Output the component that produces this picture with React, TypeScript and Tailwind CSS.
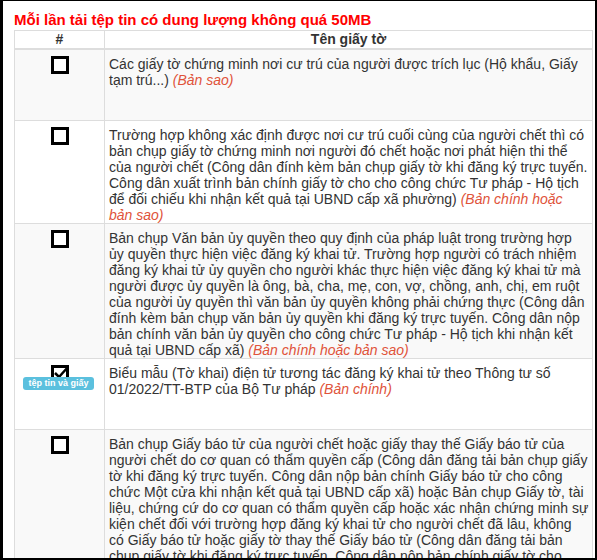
// each line: [plain text, italic note]
type Line = [string, string?];

const rows: { lines: Line[]; checked?: boolean; badge?: string }[] = [
  {
    lines: [
      ["Các giấy tờ chứng minh nơi cư trú của người được trích lục (Hộ khẩu, Giấy"],
      ["tạm trú...) ", "(Bản sao)"],
    ],
  },
  {
    lines: [
      ["Trường hợp không xác định được nơi cư trú cuối cùng của người chết thì có"],
      ["bản chụp giấy tờ chứng minh nơi người đó chết hoặc nơi phát hiện thi thể"],
      ["của người chết (Công dân đính kèm bản chụp giấy tờ khi đăng ký trực tuyến."],
      ["Công dân xuất trình bản chính giấy tờ cho cho công chức Tư pháp - Hộ tịch"],
      ["để đối chiếu khi nhận kết quả tại UBND cấp xã phường) ", "(Bản chính hoặc"],
      ["", "bản sao)"],
    ],
  },
  {
    lines: [
      ["Bản chụp Văn bản ủy quyền theo quy định của pháp luật trong trường hợp"],
      ["ủy quyền thực hiện việc đăng ký khai tử. Trường hợp người có trách nhiệm"],
      ["đăng ký khai tử ủy quyền cho người khác thực hiện việc đăng ký khai tử mà"],
      ["người được ủy quyền là ông, bà, cha, mẹ, con, vợ, chồng, anh, chị, em ruột"],
      ["của người ủy quyền thì văn bản ủy quyền không phải chứng thực (Công dân"],
      ["đính kèm bản chụp văn bản ủy quyền khi đăng ký trực tuyến. Công dân nộp"],
      ["bản chính văn bản ủy quyền cho công chức Tư pháp - Hộ tịch khi nhận kết"],
      ["quả tại UBND cấp xã) ", "(Bản chính hoặc bản sao)"],
    ],
  },
  {
    lines: [
      ["Biểu mẫu (Tờ khai) điện tử tương tác đăng ký khai tử theo Thông tư số"],
      ["01/2022/TT-BTP của Bộ Tư pháp ", "(Bản chính)"],
    ],
    checked: true,
    badge: "tệp tin và giấy",
  },
  {
    lines: [
      ["Bản chụp Giấy báo tử của người chết hoặc giấy thay thế Giấy báo tử của"],
      ["người chết do cơ quan có thẩm quyền cấp (Công dân đăng tải bản chụp giấy"],
      ["tờ khi đăng ký trực tuyến. Công dân nộp bản chính Giấy báo tử cho công"],
      ["chức Một cửa khi nhận kết quả tại UBND cấp xã) hoặc Bản chụp Giấy tờ, tài"],
      ["liệu, chứng cứ do cơ quan có thẩm quyền cấp hoặc xác nhận chứng minh sự"],
      ["kiện chết đối với trường hợp đăng ký khai tử cho người chết đã lâu, không"],
      ["có Giấy báo tử hoặc giấy tờ thay thế Giấy báo tử (Công dân đăng tải bản"],
      ["chụp giấy tờ khi đăng ký trực tuyến. Công dân nộp bản chính giấy tờ cho"],
      ["công chức Tư pháp - Hộ tịch khi nhận kết quả tại UBND cấp xã) ", "(Bản chính hoặc bản sao)"],
    ],
  },
];

function Checkbox({ checked }: { checked?: boolean }) {
  return (
    <div className="relative h-[18px] w-[18px] border-[3px] border-black bg-white">
      {checked && (
        <svg className="absolute -left-[1px] -top-[3px] h-[16px] w-[16px]" viewBox="0 0 16 16">
          <path d="M2 8 L6 12 L15 2" fill="none" stroke="#000" strokeWidth="2.5" />
        </svg>
      )}
    </div>
  );
}

export default function App() {
  return (
    <div
      className="box-border h-[560px] w-[597px] overflow-hidden border-t border-r-2 border-b-2 border-l-[3px] border-black bg-white pl-[11px] text-[#333]"
      style={{ fontFamily: '"Liberation Sans", Arial, sans-serif' }}
    >
      <div className="pt-[10px] text-[15px] font-bold leading-[18px] text-[#ff0000]">
        Mỗi lần tải tệp tin có dung lượng không quá 50MB
      </div>

      <div className="mt-[1px] w-[579px] border-x border-t border-[#ddd]">
        {/* Header */}
        <div className="flex border-b-2 border-[#ddd] text-[14px] font-bold leading-[17px]">
          <div className="w-[90px] shrink-0 border-r border-[#ddd] text-center">#</div>
          <div className="flex-1 text-center">Tên giấy tờ</div>
        </div>

        {rows.map((r, i) => (
          <div
            key={i}
            className={`flex min-h-[71px] border-b border-[#ddd] ${i % 2 === 0 ? "bg-[#f9f9f9]" : "bg-white"}`}
          >
            <div className="relative flex w-[90px] shrink-0 justify-center border-r border-[#ddd] pt-[6px]">
              <Checkbox checked={r.checked} />
              {r.badge && (
                <span className="absolute left-[8px] top-[18px] flex h-[13px] w-[71px] items-center justify-center rounded-[3px] bg-[#5bc0de] text-[9px] font-bold leading-none text-white">
                  {r.badge}
                </span>
              )}
            </div>
            <div className="min-w-0 flex-1 overflow-hidden pt-[6px] pl-[4px] text-[14px] leading-[16px] whitespace-pre">
              {r.lines.map(([plain, note], j) => (
                <div key={j}>
                  {plain}
                  {note && <em className="text-[#e0533a]">{note}</em>}
                </div>
              ))}
            </div>
          </div>
        ))}
      </div>
    </div>
  );
}
